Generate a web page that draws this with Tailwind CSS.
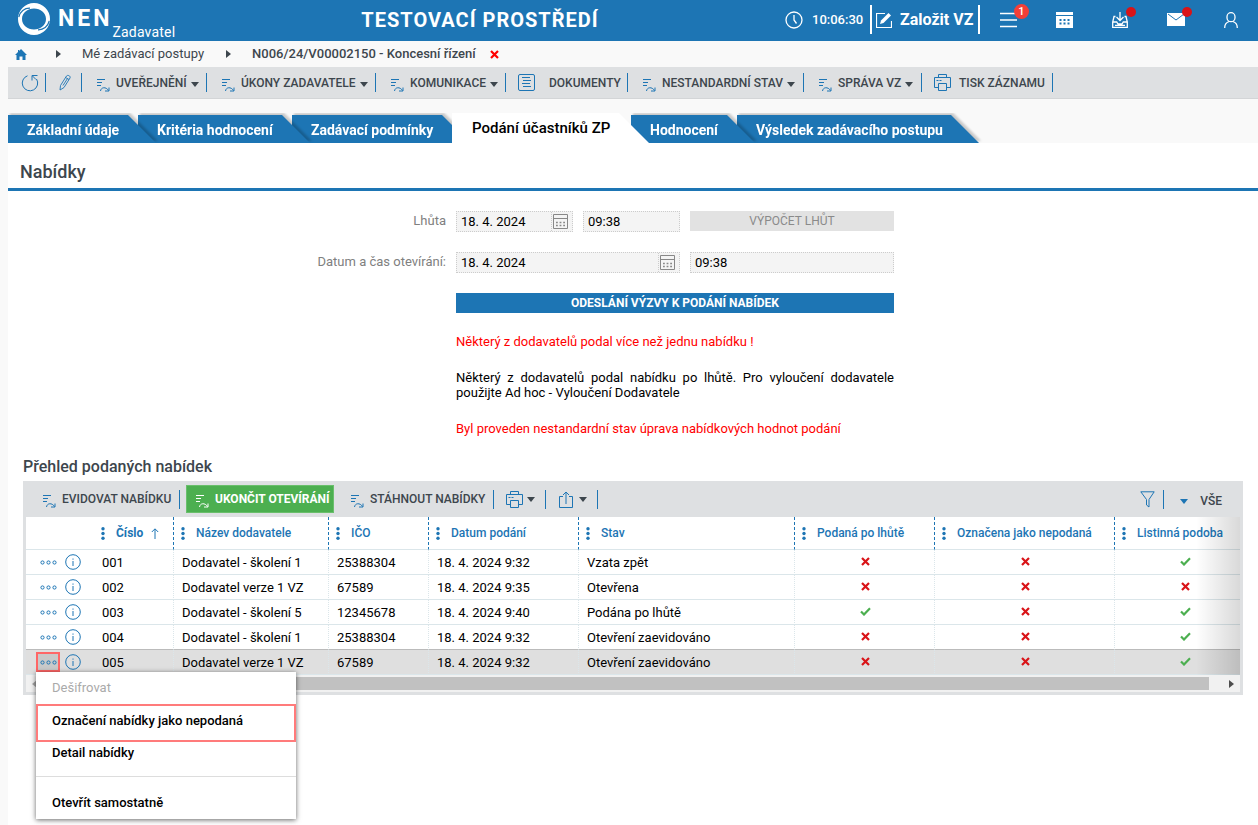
<!DOCTYPE html>
<html lang="cs">
  <head>
    <meta charset="UTF-8" />
    <meta name="viewport" content="width=device-width, initial-scale=1.0" />
    <title>NEN - Podání účastníků ZP</title>
    <script src="https://cdn.jsdelivr.net/npm/@tailwindcss/browser@4"></script>
  </head>
  <body class="flex min-h-screen flex-col bg-[#f9f9f9] font-['Roboto',sans-serif] text-[13px] text-black">
    <!-- icon sprite -->
    <svg class="hidden">
      <symbol id="i-action" viewBox="0 0 14 14" fill="none" stroke="currentColor">
        <path d="M1 1.500h8M1 4.500h5M1 7.500h4" />
        <path d="M4.500 13c.5-4 5.500-4.500 8-.5M13 9.500v3.500H9" />
      </symbol>
      <symbol id="i-refresh" viewBox="0 0 18 18" fill="none" stroke="currentColor">
        <path d="M6.500 1.800A7.700 7.700 0 1 0 15.500 5M11 6.500V1.500h5.500M11.500 2l3.500 3.500" />
      </symbol>
      <symbol id="i-pencil" viewBox="0 0 12 17" fill="none" stroke="currentColor">
        <path d="M1 16l.5-4.500L7.500 2c1-1.500 4.500 0 3.500 2L5 13.500zM4 11.500L8.500 4.500M6.500 3.500l3.500 2" stroke-width=".9" />
      </symbol>
      <symbol id="i-list" viewBox="0 0 17 17" fill="none" stroke="currentColor">
        <rect x=".5" y=".5" width="16" height="16" rx="1.500" />
        <path d="M4 3.500h8M5 6.500h8M4 9.500h8M5 12.500h8" />
      </symbol>
      <symbol id="i-print" viewBox="0 0 17 17" fill="none" stroke="currentColor">
        <path d="M4.500 3.500v-3h8v3M4.500 13.500h-4v-10h16v10h-4M4.500 9.500h8v7h-8zM2.500 6.500h2M5.500 6.500h2" />
      </symbol>
      <symbol id="i-export" viewBox="0 0 14 17" fill="none" stroke="currentColor">
        <path d="M4 5.500H.5v11h13v-11H10M7 13V1M4 4l3-3 3 3" />
      </symbol>
      <symbol id="i-funnel" viewBox="0 0 15 17" fill="none" stroke="currentColor">
        <path d="M.8.800h13.400L9 8.500V16l-2.500-2V8.500z" />
      </symbol>
      <symbol id="i-caret" viewBox="0 0 8 5"><path d="M0 0h8L4 5z" fill="currentColor" /></symbol>
      <symbol id="i-right" viewBox="0 0 5 8"><path d="M0 0l5 4-5 4z" fill="currentColor" /></symbol>
      <symbol id="i-x" viewBox="0 0 9 9">
        <path d="M1 1l7 7M8 1L1 8" stroke="currentColor" stroke-width="2.200" />
      </symbol>
      <symbol id="i-check" viewBox="0 0 11 9">
        <path d="M1 4.500L4 7.500 10 1.200" fill="none" stroke="currentColor" stroke-width="2.200" />
      </symbol>
      <symbol id="i-dots" viewBox="0 0 17 5" fill="none" stroke="currentColor">
        <circle cx="2.500" cy="2.500" r="1.600" /><circle cx="8.500" cy="2.500" r="1.600" /><circle cx="14.500" cy="2.500" r="1.600" />
      </symbol>
      <symbol id="i-info" viewBox="0 0 16 16" fill="none" stroke="currentColor">
        <circle cx="8" cy="8" r="7.300" /><path d="M8 7v5M8 4.500v1.200" />
      </symbol>
      <symbol id="i-kebab" viewBox="0 0 4 13" fill="currentColor">
        <circle cx="2" cy="1.800" r="1.700" /><circle cx="2" cy="6.500" r="1.700" /><circle cx="2" cy="11.200" r="1.700" />
      </symbol>
      <symbol id="i-date" viewBox="0 0 15 17" fill="none" stroke="currentColor">
        <path d="M.5 1.500h14v14H.5zM.5 5.500h14" /><path d="M3 9.500h9M3 12.500h9" stroke-width="1.500" stroke-dasharray="1.800 1.800" />
      </symbol>
    </svg>

    <header class="flex h-[41px] items-center bg-[#1d75b4] text-white">
      <div class="flex h-[38px] w-[175px] shrink-0 items-center self-start pl-[18px]">
        <svg class="size-8 shrink-0" viewBox="0 0 32 32">
          <path
            fill="#fff"
            fill-rule="evenodd"
            d="M16 0A16 16 0 0 1 16 32A16 16 0 0 1 16 0zM16 5.500C9.500 5.500 4 10 4 16S9.500 26.500 16 26.500 28 22 28 16 22.500 5.500 16 5.500z"
          />
          <path d="M.8 14C2 8.500 6.500 5 12 5.200M31.200 18C30 23.500 25.500 27 20 26.800" fill="none" stroke="#1d75b4" stroke-width="1.200" />
        </svg>
        <span class="ml-2 text-[23px] font-bold tracking-[3px]">NEN</span>
        <span class="mt-[26px] text-[14px] leading-4 tracking-[0.2px]">Zadavatel</span>
      </div>
      <h1 class="flex-1 pb-0.5 text-center text-[20px] font-bold tracking-[1px] whitespace-nowrap">TESTOVACÍ PROSTŘEDÍ</h1>
      <div class="flex shrink-0 items-center pb-0.5">
        <svg class="size-[18px]" viewBox="0 0 18 18" fill="none" stroke="#fff" stroke-width="1.300">
          <circle cx="9" cy="9" r="8" /><path d="M9 4v5l2.500 3.500" />
        </svg>
        <time class="ml-[9px] w-[58px] font-medium">10:06:30</time>
        <button class="flex h-[29px] w-[110px] items-center gap-2 border-x-2 border-white pl-1 text-[16px] font-bold whitespace-nowrap">
          <svg class="size-4 shrink-0" viewBox="0 0 16 16" fill="none" stroke="#fff">
            <path d="M9 1.500H.5v14h15V9" stroke-width="1.200" />
            <path d="M4 12l1-3.500L12.500 1 15 3.500 7.500 11z" fill="#fff" stroke="none" />
          </svg>
          Založit VZ
        </button>
        <nav class="flex" aria-label="Uživatel">
          <button class="relative flex h-8 w-14 items-center justify-center" aria-label="Menu">
            <svg class="h-4 w-[17px]" viewBox="0 0 17 16" stroke="#fff" stroke-width="1.500"><path d="M0 1.500h17M0 8h17M0 14.500h17" /></svg>
            <span class="absolute top-0 left-[34px] size-[15px] rounded-full bg-[#f33f38] text-center text-[11px] leading-[15px] font-medium">1</span>
          </button>
          <button class="flex h-8 w-14 items-center justify-center" aria-label="Kalendář">
            <svg class="h-4 w-[17px]" viewBox="0 0 17 16">
              <path d="M0 0h17v3H0zM0 4h17v12H0z" fill="#fff" />
              <path d="M3.500 8h10M3.500 11.500h10" stroke="#1d75b4" stroke-width="2" stroke-dasharray="2 2" />
            </svg>
          </button>
          <button class="relative flex h-8 w-14 items-center justify-center" aria-label="Doručené">
            <svg class="size-4" viewBox="0 0 16 16" fill="none" stroke="#fff" stroke-width="1.300">
              <path d="M3.500 4.500H2L.7 10v5.300h14.600V10L14 4.500h-1.500M.7 10h4l1.300 2h4l1.300-2h4M8 0v8M4.500 5L8 8.500 11.500 5M3 13.300h10" />
            </svg>
            <span class="absolute top-[3px] left-[34px] size-2.5 rounded-full bg-[#d91418]"></span>
          </button>
          <button class="relative flex h-8 w-14 items-center justify-center" aria-label="Zprávy">
            <svg class="h-[13px] w-[18px]" viewBox="0 0 18 13"><path d="M0 0h18v13H0z" fill="#fff" /><path d="M1 1l8 6 8-6" fill="none" stroke="#1d75b4" /></svg>
            <span class="absolute top-[3px] left-[34px] size-2.5 rounded-full bg-[#d91418]"></span>
          </button>
          <button class="flex h-8 w-[54px] items-center justify-center" aria-label="Profil">
            <svg class="h-4 w-3.5" viewBox="0 0 14 16" fill="none" stroke="#fff" stroke-width="1.300">
              <rect x="3" y=".7" width="8" height="9" rx="4" /><path d="M.7 16c0-4 1.300-5 4.300-6.500M13.300 16c0-4-1.300-5-4.300-6.500" />
            </svg>
          </button>
        </nav>
      </div>
    </header>

    <nav class="flex h-[26px] items-center pl-[15px] text-[#3d464d]" aria-label="Drobečky">
      <a href="#" aria-label="Domů">
        <svg class="h-[11px] w-3" viewBox="0 0 12 11" fill="#1d75b4"><path d="M6 0l6 6h-1.500v5h-3V7.500h-3V11h-3V6H0l3-3V1h1.200v1z" /></svg>
      </a>
      <svg class="ml-[29px] h-2 w-[5px]"><use href="#i-right" /></svg>
      <a href="#" class="ml-[21px]">Mé zadávací postupy</a>
      <svg class="ml-[22px] h-2 w-[5px]"><use href="#i-right" /></svg>
      <a href="#" class="ml-[21px] font-medium">N006/24/V00002150 - Koncesní řízení</a>
      <button class="ml-3.5 text-[#f00]" aria-label="Zavřít"><svg class="size-[9px]"><use href="#i-x" /></svg></button>
    </nav>

    <div class="ml-2 flex h-8 items-center overflow-hidden border-b border-[#d3d5d7] bg-[#dee0e2] text-[12px] font-medium whitespace-nowrap text-[#3d464d]" role="toolbar">
      <button class="flex h-[19px] w-[38px] items-center border-r border-[#1d75b4] pl-[13px] text-[#1d75b4]" aria-label="Obnovit">
        <svg class="size-[18px]"><use href="#i-refresh" /></svg>
      </button>
      <button class="flex h-[19px] w-9 items-center border-r border-[#1d75b4] pl-[13px] text-[#1d75b4]" aria-label="Upravit">
        <svg class="h-[17px] w-3"><use href="#i-pencil" /></svg>
      </button>
      <button class="flex h-[19px] w-[125px] items-center border-r border-[#1d75b4] pl-3.5">
        <svg class="mt-1 mr-1.5 size-3.5 text-[#1d75b4]"><use href="#i-action" /></svg>UVEŘEJNĚNÍ<svg class="mt-1 ml-1 h-[5px] w-2"><use href="#i-caret" /></svg>
      </button>
      <button class="flex h-[19px] w-[169px] items-center border-r border-[#1d75b4] pl-3.5">
        <svg class="mt-1 mr-1.5 size-3.5 text-[#1d75b4]"><use href="#i-action" /></svg>ÚKONY ZADAVATELE<svg class="mt-1 ml-1 h-[5px] w-2"><use href="#i-caret" /></svg>
      </button>
      <button class="flex h-[19px] w-[130px] items-center border-r border-[#1d75b4] pl-3.5">
        <svg class="mt-1 mr-1.5 size-3.5 text-[#1d75b4]"><use href="#i-action" /></svg>KOMUNIKACE<svg class="mt-1 ml-1 h-[5px] w-2"><use href="#i-caret" /></svg>
      </button>
      <button class="flex h-[19px] w-[122px] items-center border-r border-[#1d75b4] pl-3">
        <svg class="mr-3.5 size-[17px] text-[#1d75b4]"><use href="#i-list" /></svg>DOKUMENTY
      </button>
      <button class="flex h-[19px] w-44 items-center border-r border-[#1d75b4] pl-3.5">
        <svg class="mt-1 mr-1.5 size-3.5 text-[#1d75b4]"><use href="#i-action" /></svg>NESTANDARDNÍ STAV<svg class="mt-1 ml-1 h-[5px] w-2"><use href="#i-caret" /></svg>
      </button>
      <button class="flex h-[19px] w-[118px] items-center border-r border-[#1d75b4] pl-3.5">
        <svg class="mt-1 mr-1.5 size-3.5 text-[#1d75b4]"><use href="#i-action" /></svg>SPRÁVA VZ<svg class="mt-1 ml-1 h-[5px] w-2"><use href="#i-caret" /></svg>
      </button>
      <button class="flex h-[19px] w-[131px] items-center border-r border-[#1d75b4] pl-3">
        <svg class="mr-2 size-[17px] text-[#1d75b4]"><use href="#i-print" /></svg>TISK ZÁZNAMU
      </button>
    </div>

    <!-- tabs overlap to the right, each one lies over its successor -->
    <div class="isolate mt-3.5 ml-2 flex h-[30px] items-end overflow-hidden text-[14px] font-bold whitespace-nowrap text-white" role="tablist">
      <div class="z-50 -mr-[18px] drop-shadow-[2px_-2px_1px_rgba(0,0,0,0.2)]">
        <button role="tab" class="h-7 w-[148px] bg-[#1d75b4] pt-0.5 pl-[19px] text-left [clip-path:polygon(0_0,calc(100%-28px)_0,100%_100%,0_100%)]">Základní údaje</button>
      </div>
      <div class="z-40 -mr-[18px] drop-shadow-[2px_-2px_1px_rgba(0,0,0,0.2)]">
        <button role="tab" class="h-7 w-[172px] bg-[#1d75b4] pt-0.5 pl-[19px] text-left [clip-path:polygon(0_0,calc(100%-28px)_0,100%_100%,0_100%)]">Kritéria hodnocení</button>
      </div>
      <div class="z-30 -mr-[18px] drop-shadow-[2px_-2px_1px_rgba(0,0,0,0.2)]">
        <button role="tab" class="h-7 w-[178px] bg-[#1d75b4] pt-0.5 pl-[19px] text-left [clip-path:polygon(0_0,calc(100%-28px)_0,100%_100%,0_100%)]">Zadávací podmínky</button>
      </div>
      <div class="z-60 -mr-[18px]">
        <button role="tab" aria-selected="true" class="h-[30px] w-[197px] bg-white pl-5 text-left text-[15px] font-medium text-black [clip-path:polygon(0_0,calc(100%-30px)_0,100%_100%,0_100%)]">Podání účastníků ZP</button>
      </div>
      <div class="z-20 -mr-[18px] drop-shadow-[2px_-2px_1px_rgba(0,0,0,0.2)]">
        <button role="tab" class="h-7 w-[124px] bg-[#1d75b4] pt-0.5 pl-[19px] text-left [clip-path:polygon(0_0,calc(100%-28px)_0,100%_100%,0_100%)]">Hodnocení</button>
      </div>
      <div class="z-10 drop-shadow-[2px_-2px_1px_rgba(0,0,0,0.2)]">
        <button role="tab" class="h-7 w-[242px] bg-[#1d75b4] pt-0.5 pl-[19px] text-left [clip-path:polygon(0_0,calc(100%-28px)_0,100%_100%,0_100%)]">Výsledek zadávacího postupu</button>
      </div>
    </div>

    <main class="ml-2 flex-1 bg-white">
      <h2 class="flex h-12 items-center border-b-3 border-[#1d75b4] pt-3 pl-3 text-[18px] font-medium text-[#3d464d]">Nabídky</h2>

      <form class="mt-5 grid grid-cols-[438px_117px_97px_204px] gap-x-2.5 gap-y-5">
        <label for="deadline" class="text-right text-[#808080]">Lhůta</label>
        <div class="flex h-[21px] border border-dotted border-[#ccc] bg-[#f4f4f4]">
          <input id="deadline" type="text" value="18. 4. 2024" class="w-full min-w-0 px-1" />
          <button type="button" class="flex w-[21px] shrink-0 items-center border-l border-dotted border-[#ccc] pl-px text-[#888]" aria-label="Vybrat datum lhůty"><svg class="h-[17px] w-[15px]"><use href="#i-date" /></svg></button>
        </div>
        <input type="text" value="09:38" aria-label="Čas lhůty" class="h-[21px] border border-dotted border-[#ccc] bg-[#f4f4f4] px-1" />
        <button type="button" disabled class="h-5 bg-[#e2e2e2] text-[12px] text-[#8a8a8a]">VÝPOČET LHŮT</button>

        <label for="opening" class="text-right text-[#808080]">Datum a čas otevírání:</label>
        <div class="col-span-2 flex h-[21px] border border-dotted border-[#ccc] bg-[#f4f4f4]">
          <input id="opening" type="text" value="18. 4. 2024" class="w-full min-w-0 px-1" />
          <button type="button" class="flex w-[21px] shrink-0 items-center border-l border-dotted border-[#ccc] pl-px text-[#888]" aria-label="Vybrat datum otevírání"><svg class="h-[17px] w-[15px]"><use href="#i-date" /></svg></button>
        </div>
        <input type="text" value="09:38" aria-label="Čas otevírání" class="h-[21px] border border-dotted border-[#ccc] bg-[#f4f4f4] px-1" />

        <button type="submit" class="col-span-3 col-start-2 h-5 bg-[#1d75b4] text-[12px] font-bold text-white">ODESLÁNÍ VÝZVY K PODÁNÍ NABÍDEK</button>
      </form>

      <div class="mt-[21px] ml-[448px] w-[438px] space-y-[21px] leading-[15px]">
        <p class="text-[#f00]">Některý z dodavatelů podal více než jednu nabídku !</p>
        <p class="text-justify">Některý z dodavatelů podal nabídku po lhůtě. Pro vyloučení dodavatele použijte Ad hoc - Vyloučení Dodavatele</p>
        <p class="text-[#f00]">Byl proveden nestandardní stav úprava nabídkových hodnot podání</p>
      </div>

      <h3 class="mt-5 ml-[15px] text-[16px] leading-[22px] font-medium text-[#3d464d]">Přehled podaných nabídek</h3>

      <section class="relative mt-[3px] mr-[15px] ml-[15px] border-x-3 border-b-3 border-[#dee0e2]">
        <div class="flex h-9 items-center bg-[#dee0e2] text-[12px] font-medium whitespace-nowrap text-[#3d464d]" role="toolbar">
          <button class="flex h-[19px] w-[154px] items-center border-r border-[#1d75b4] pl-4">
            <svg class="mt-1 mr-1.5 size-3.5 text-[#1d75b4]"><use href="#i-action" /></svg>EVIDOVAT NABÍDKU
          </button>
          <button class="ml-1.5 flex h-7 w-[148px] items-center border border-[#6abf6c] bg-[#4caf50] pl-2 font-bold text-white">
            <svg class="mt-1 mr-1.5 size-3.5"><use href="#i-action" /></svg>UKONČIT OTEVÍRÁNÍ
          </button>
          <button class="flex h-[19px] w-40 items-center border-r border-[#1d75b4] pl-4">
            <svg class="mt-1 mr-1.5 size-3.5 text-[#1d75b4]"><use href="#i-action" /></svg>STÁHNOUT NABÍDKY
          </button>
          <button class="flex h-[19px] w-[52px] items-center gap-1 border-r border-[#1d75b4] pl-3" aria-label="Tisk">
            <svg class="size-[17px] text-[#1d75b4]"><use href="#i-print" /></svg><svg class="h-[5px] w-2"><use href="#i-caret" /></svg>
          </button>
          <button class="flex h-[19px] w-[52px] items-center gap-1.5 border-r border-[#1d75b4] pl-[13px]" aria-label="Export">
            <svg class="h-[17px] w-3.5 text-[#1d75b4]"><use href="#i-export" /></svg><svg class="h-[5px] w-2"><use href="#i-caret" /></svg>
          </button>
          <button class="ml-auto flex h-[19px] items-center border-r border-[#1d75b4] pr-2 text-[#1d75b4]" aria-label="Filtr">
            <svg class="h-[17px] w-[15px]"><use href="#i-funnel" /></svg>
          </button>
          <button class="flex items-center pt-1 pr-[18px] pl-4">
            <svg class="mr-3 h-[5px] w-2 text-[#1d75b4]"><use href="#i-caret" /></svg>VŠE
          </button>
        </div>

        <div class="relative">
          <table class="w-full table-fixed border-separate border-spacing-0 bg-white whitespace-nowrap">
            <colgroup>
              <col class="w-17" /><col class="w-20" /><col class="w-[155px]" /><col class="w-[100px]" /><col class="w-[150px]" />
              <col class="w-[216px]" /><col class="w-[140px]" /><col class="w-[180px]" /><col />
            </colgroup>
            <thead id="head"></thead>
            <tbody id="rows"></tbody>
          </table>
          <div class="pointer-events-none absolute inset-y-0 right-0 w-11 bg-linear-to-r from-transparent to-black/15"></div>
        </div>

        <div class="flex h-[17px] items-center bg-[#f1f1f1] px-1.5 text-[#4d4d4d]">
          <svg class="h-2 w-[5px] rotate-180 text-[#a3a3a3]"><use href="#i-right" /></svg>
          <div class="mr-5 ml-1 h-[13px] flex-1 bg-[#c1c1c1]"></div>
          <svg class="h-2 w-[5px]"><use href="#i-right" /></svg>
        </div>

        <ul class="absolute top-full left-2.5 z-10 -mt-5 w-[260px] bg-white shadow-[0_1px_5px_rgba(0,0,0,0.6)]" role="menu">
          <li><button class="h-8 w-full pl-4 text-left text-[#aaa]" role="menuitem" disabled>Dešifrovat</button></li>
          <li><button class="h-[38px] w-full border-2 border-[#ff7b7b] pb-1 pl-3.5 text-left font-medium" role="menuitem">Označení nabídky jako nepodaná</button></li>
          <li class="border-b border-[#ddd] pb-3"><button class="h-[22px] w-full pl-4 text-left font-medium" role="menuitem">Detail nabídky</button></li>
          <li class="pt-2.5"><button class="h-8 w-full pl-4 text-left font-medium" role="menuitem">Otevřít samostatně</button></li>
        </ul>
      </section>
    </main>

    <script>
      const columns = ["Číslo", "Název dodavatele", "IČO", "Datum podání", "Stav", "Podaná po lhůtě", "Označena jako nepodaná", "Listinná podoba"];
      const offers = [
        ["001", "Dodavatel - školení 1", "25388304", "18. 4. 2024 9:32", "Vzata zpět", false, false, true],
        ["002", "Dodavatel verze 1 VZ", "67589", "18. 4. 2024 9:35", "Otevřena", false, false, false],
        ["003", "Dodavatel - školení 5", "12345678", "18. 4. 2024 9:40", "Podána po lhůtě", true, false, true],
        ["004", "Dodavatel - školení 1", "25388304", "18. 4. 2024 9:32", "Otevření zaevidováno", false, false, true],
        ["005", "Dodavatel verze 1 VZ", "67589", "18. 4. 2024 9:32", "Otevření zaevidováno", false, false, true],
      ];

      const mark = (ok) =>
        ok
          ? `<svg class="mx-auto h-[9px] w-[11px] text-[#4caf50]" role="img" aria-label="Ano"><use href="#i-check" /></svg>`
          : `<svg class="mx-auto size-[9px] text-[#d91418]" role="img" aria-label="Ne"><use href="#i-x" /></svg>`;

      document.getElementById("head").innerHTML =
        `<tr class="h-[33px] text-[12px] text-[#1d75b4]"><td class="border-b border-[#dbe6ea]"></td>` +
        columns
          .map(
            (name, i) => `
            <th class="border-b border-b-[#dbe6ea] p-0 pl-[7px] text-left ${i < 7 ? "border-r border-r-[#1d75b4] [border-right-style:dashed]" : ""} ${i === 0 ? "font-bold" : "font-medium"}">
              <span class="flex items-center">
                <svg class="mr-[11px] h-[13px] w-1 shrink-0"><use href="#i-kebab" /></svg>${name}
                ${i === 0 ? `<svg class="ml-2 h-[11px] w-2" viewBox="0 0 8 11" fill="none" stroke="currentColor"><path d="M4 11V1M.8 4L4 .8 7.200 4" /></svg>` : ""}
              </span>
            </th>`
          )
          .join("") +
        `</tr>`;

      document.getElementById("rows").innerHTML = offers
        .map((offer, n) => {
          const selected = n === 4;
          const line = n === 3 ? "border-b border-b-[#bbb]" : "border-b border-b-[#dbe6ea]";
          return `
          <tr class="h-[25px] ${selected ? "bg-[#dfdfdf]" : ""}">
            <td class="p-0 ${line}">
              <div class="flex h-6 items-center pl-2.5">
                <button class="flex h-5 w-6 items-center justify-center text-[#1d75b4] ${selected ? "border-2 border-[#f66] bg-[#c9c9c9]" : ""}" aria-label="Akce"><svg class="h-[5px] w-[17px] shrink-0"><use href="#i-dots" /></svg></button>
                <button class="ml-[5px] text-[#1d75b4]" aria-label="Info"><svg class="size-4"><use href="#i-info" /></svg></button>
              </div>
            </td>
            ${offer
              .map((value, i) => {
                const isMark = typeof value === "boolean";
                const pad = !isMark ? "p-0 pt-px pl-2" : i === 7 ? "p-0 pb-0.5 pl-4" : "p-0 pb-0.5 pl-0.5";
                return `<td class="${pad} ${line} ${i < 7 ? "border-r border-r-[#dbe6ea] [border-right-style:dotted]" : ""}">${isMark ? mark(value) : value}</td>`;
              })
              .join("")}
          </tr>`;
        })
        .join("");
    </script>
  </body>
</html>
